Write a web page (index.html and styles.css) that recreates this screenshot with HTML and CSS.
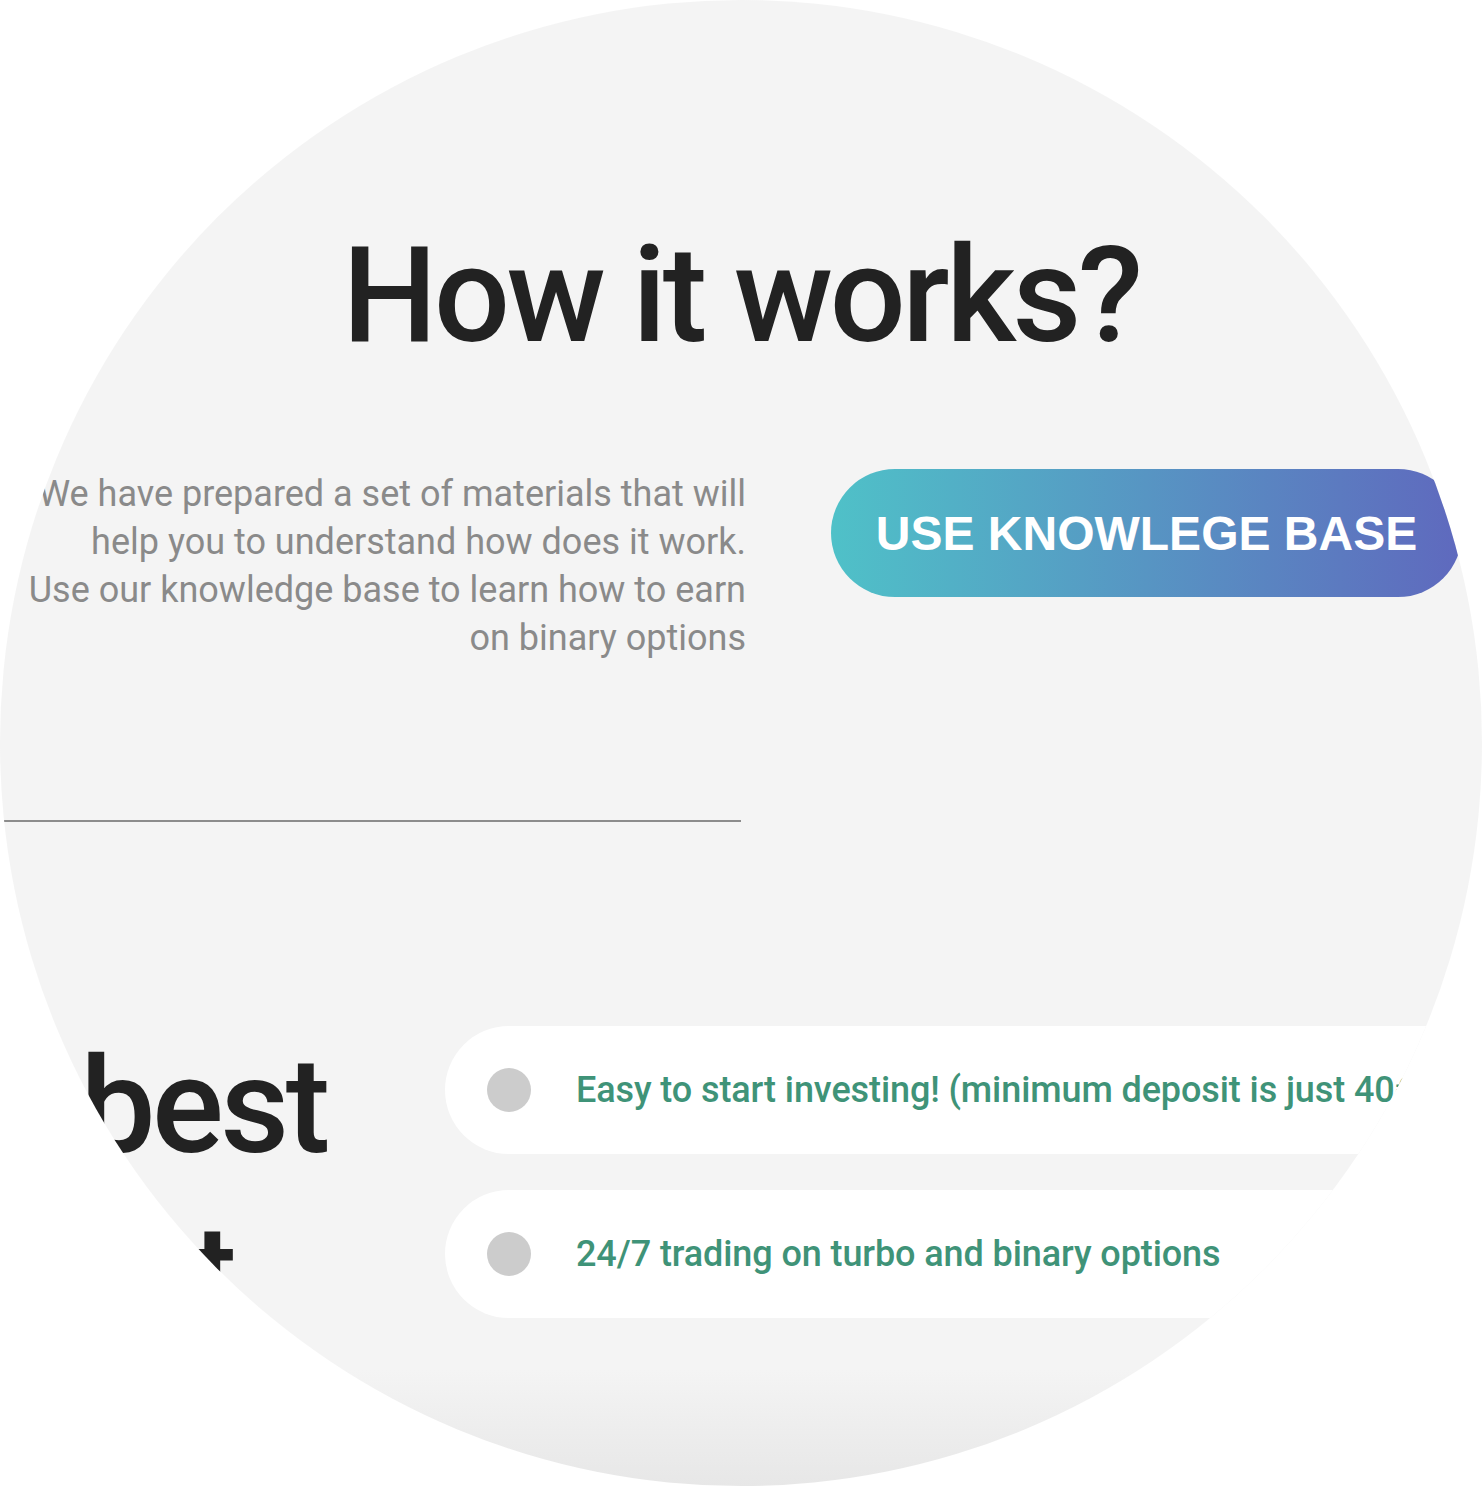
FILE: index.html
```html
<!DOCTYPE html>
<html lang="en">
<head>
<meta charset="utf-8">
<title>How it works?</title>
<link rel="stylesheet" href="styles.css">
</head>
<body>
<div class="stage">
  <section class="how">
    <h2 class="how-title">How it works?</h2>
    <div class="how-row">
      <div class="how-col">
        <p class="how-text">We have prepared a set of materials that will help you to understand how does it work. Use our knowledge base to learn how to earn on binary options</p>
      </div>
      <a class="kb-button" href="#">USE KNOWLEGE BASE</a>
    </div>
    <div class="divider"></div>
  </section>
  <section class="benefits">
    <h2 class="benefits-title">The best<br>market</h2>
    <ul class="benefit-list">
      <li class="benefit"><span class="benefit-dot"></span><span class="benefit-text">Easy to start investing! (minimum deposit is just 40€)</span></li>
      <li class="benefit"><span class="benefit-dot"></span><span class="benefit-text">24/7 trading on turbo and binary options</span></li>
    </ul>
  </section>
</div>
</body>
</html>
```
FILE: styles.css
```css
html, body {
  margin: 0;
  padding: 0;
  background: #ffffff;
}

body {
  font-family: Roboto, "Liberation Sans", Arial, sans-serif;
}

.stage {
  width: 1482px;
  height: 1486px;
  border-radius: 50%;
  overflow: hidden;
  background: linear-gradient(to bottom, #f4f4f4 0, #f4f4f4 1370px, #e7e7e7 1486px);
  padding-top: 229px;
  box-sizing: border-box;
}

.how-title {
  margin: 0;
  font-size: 134px;
  line-height: 1;
  font-weight: 500;
  color: #222222;
  text-align: center;
  letter-spacing: -3.5px;
}

.how-row {
  display: flex;
  align-items: flex-start;
  gap: 85px;
  margin-top: 106px;
}

.how-col {
  flex: 0 0 746px;
  display: flex;
  justify-content: flex-end;
}

.how-text {
  width: 720px;
  margin: 1px 0 0;
  font-size: 36px;
  line-height: 48px;
  color: #8a8a8a;
  text-align: right;
}

.kb-button {
  flex: 0 0 auto;
  width: 631px;
  height: 128px;
  border-radius: 64px;
  background: linear-gradient(to right, #4fc1c8, #5f69be);
  color: #ffffff;
  font-family: "Liberation Sans", Arial, sans-serif;
  font-weight: 700;
  font-size: 48px;
  display: flex;
  align-items: center;
  justify-content: center;
  text-decoration: none;
}

.divider {
  width: 738px;
  height: 2px;
  margin: 158px 0 0 3px;
  background: #8c8c8c;
}

.benefits {
  display: flex;
  align-items: flex-start;
  margin-top: 204px;
}

.benefits-title {
  flex: 0 0 612px;
  margin: -3px 0 0 -167px;
  font-size: 134px;
  line-height: 168px;
  font-weight: 500;
  color: #222222;
  letter-spacing: -3.5px;
}

.benefit-list {
  list-style: none;
  margin: 0;
  padding: 0;
  display: flex;
  flex-direction: column;
  gap: 36px;
}

.benefit {
  width: 1100px;
  height: 128px;
  border-radius: 64px 0 0 64px;
  background: #ffffff;
  display: flex;
  align-items: center;
  gap: 45px;
  padding-left: 42px;
  box-sizing: border-box;
}

.benefit-dot {
  flex: 0 0 44px;
  width: 44px;
  height: 44px;
  border-radius: 50%;
  background: #cccccc;
}

.benefit-text {
  font-size: 36px;
  font-weight: 500;
  color: #3f9378;
  white-space: nowrap;
  letter-spacing: -0.1px;
}
```
